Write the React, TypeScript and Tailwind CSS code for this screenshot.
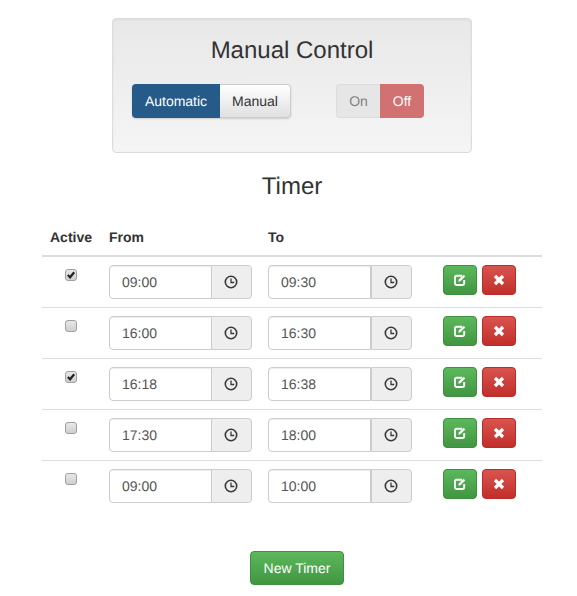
import React from "react";

const font = { fontFamily: '"Liberation Sans", Arial, sans-serif' };

function Clock() {
  return (
    <svg width="14" height="14" viewBox="0 0 14 14" fill="none" stroke="#3a3a3a" strokeWidth="1.6">
      <circle cx="7" cy="7" r="5.7" />
      <path d="M7 3.4V7.5H10.2" strokeWidth="1.3" />
    </svg>
  );
}

function TimeInput({ value, wide }: { value: string; wide?: boolean }) {
  return (
    <div className={wide ? "flex w-[144px] h-[34px]" : "flex w-[143px] h-[34px]"}>
      <div className="w-[103px] h-full border border-[#ccc] rounded-l-[4px] bg-white pl-3 text-[14px] leading-[32px] text-[#555] shadow-[inset_0_1px_1px_rgba(0,0,0,0.075)]">
        {value}
      </div>
      <div className={(wide ? "w-[41px]" : "w-[41px] -ml-px") + " h-full border border-[#ccc] rounded-r-[4px] bg-[#eee] flex items-center justify-center pr-[1px]"}>
        <Clock />
      </div>
    </div>
  );
}

function Check({ on }: { on: boolean }) {
  return (
    <div className="w-[12px] h-[12px] rounded-[3px] border border-[#a0a0a0] bg-gradient-to-b from-[#e8e8e8] to-[#cfcfcf] flex items-center justify-center">
      {on && (
        <svg width="10" height="10" viewBox="0 0 11 11" fill="none" stroke="#222" strokeWidth="2.4" className="shrink-0">
          <path d="M2 5.5L4.5 8L9 2.5" />
        </svg>
      )}
    </div>
  );
}

function EditBtn() {
  return (
    <div className="w-[34px] h-[30px] rounded-[4px] border border-[#3e8f3e] bg-gradient-to-b from-[#5cb85c] to-[#419641] flex items-center justify-center">
      <svg width="14" height="14" viewBox="0 0 14 14" fill="none" stroke="#fff">
        <path d="M9 2.8H3.4A1.4 1.4 0 0 0 2 4.2V10.6A1.4 1.4 0 0 0 3.4 12H9.8A1.4 1.4 0 0 0 11.2 10.6V7" strokeWidth="1.9" />
        <path d="M5.6 8.4L6 6.6L10.6 2L12 3.4L7.4 8Z" fill="#fff" strokeWidth="0.4" />
      </svg>
    </div>
  );
}

function DelBtn() {
  return (
    <div className="w-[34px] h-[30px] rounded-[4px] border border-[#b92c28] bg-gradient-to-b from-[#d9534f] to-[#c12e2a] flex items-center justify-center">
      <svg width="12" height="12" viewBox="0 0 12 12" fill="none" stroke="#fff" strokeWidth="3.2">
        <path d="M2 2L10 10M10 2L2 10" />
      </svg>
    </div>
  );
}

const rows = [
  { on: true, from: "09:00", to: "09:30" },
  { on: false, from: "16:00", to: "16:30" },
  { on: true, from: "16:18", to: "16:38" },
  { on: false, from: "17:30", to: "18:00" },
  { on: false, from: "09:00", to: "10:00" },
];

export default function App() {
  return (
    <div className="w-[577px] h-[596px] overflow-hidden bg-white pl-[42px] text-[#333] text-[14px] [text-rendering:geometricPrecision]" style={font}>
      <div className="w-[500px] pt-[18px]">
        <div className="mx-auto w-[360px] h-[135px] rounded-[4px] border border-[#dcdcdc] bg-gradient-to-b from-[#e8e8e8] to-[#f5f5f5] pt-[17px] pl-[19px] shadow-[inset_0_1px_3px_rgba(0,0,0,0.05)]">
          <h2 className="text-center pr-[19px] text-[24px] leading-[29px] font-normal">Manual Control</h2>
          <div className="flex mt-[19px]">
            <div className="flex h-[34px] shadow-[0_1px_2px_rgba(0,0,0,0.15)] rounded-[4px]">
              <div className="w-[88px] rounded-l-[4px] bg-[#265a88] text-white flex items-center justify-center">Automatic</div>
              <div className="w-[71px] rounded-r-[4px] border border-[#ccc] border-l-0 bg-gradient-to-b from-white to-[#e0e0e0] flex items-center justify-center">Manual</div>
            </div>
            <div className="flex h-[34px] ml-[45px]">
              <div className="w-[44px] rounded-l-[4px] border border-[#ddd] border-r-0 bg-[#e6e6e6] text-[#808080] flex items-center justify-center">On</div>
              <div className="w-[44px] rounded-r-[4px] bg-[#d27171] text-white flex items-center justify-center">Off</div>
            </div>
          </div>
        </div>

        <h2 className="text-center text-[24px] leading-[27px] font-normal mt-[20px]">Timer</h2>

        <table className="w-[500px] mt-[18px] border-collapse table-fixed">
          <colgroup>
            <col className="w-[59px]" />
            <col className="w-[159px]" />
            <col className="w-[175px]" />
            <col />
          </colgroup>
          <thead>
            <tr className="border-b-2 border-[#ddd]">
              <th className="h-[38px] text-left font-bold pl-2 pt-[2px]">Active</th>
              <th className="text-left font-bold pl-2 pt-[2px]">From</th>
              <th className="text-left font-bold pl-2 pt-[2px]">To</th>
              <th />
            </tr>
          </thead>
          <tbody>
            {rows.map((r, i) => (
              <tr key={i} className={i < rows.length - 1 ? "border-b border-[#ddd]" : ""}>
                <td className="h-[51px] align-top pt-[12px]">
                  <div className="flex justify-center pr-[1px]">
                    <Check on={r.on} />
                  </div>
                </td>
                <td className="pl-2 align-top pt-2"><TimeInput value={r.from} /></td>
                <td className="pl-2 align-top pt-2"><TimeInput value={r.to} wide /></td>
                <td className="pl-2 align-top pt-2">
                  <div className="flex gap-[5px]">
                    <EditBtn />
                    <DelBtn />
                  </div>
                </td>
              </tr>
            ))}
          </tbody>
        </table>

        <div className="flex justify-center mt-[40px] pl-[10px]">
          <div className="w-[94px] h-[34px] rounded-[4px] border border-[#3e8f3e] bg-gradient-to-b from-[#5cb85c] to-[#419641] text-white flex items-center justify-center">New Timer</div>
        </div>
      </div>
    </div>
  );
}
